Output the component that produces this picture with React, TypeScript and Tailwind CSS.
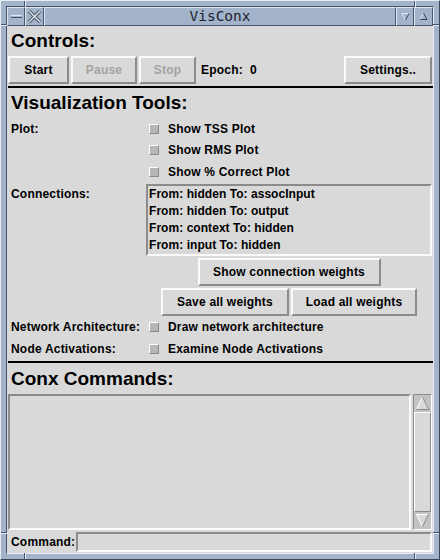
import React from 'react';

// bevel helpers (Motif style)
const raised = 'border-2 border-t-[#fbfbfb] border-l-[#fbfbfb] border-b-[#8b8b8b] border-r-[#8b8b8b]';
const sunken = 'border-2 border-t-[#8b8b8b] border-l-[#8b8b8b] border-b-[#fbfbfb] border-r-[#fbfbfb]';
const frameRaised = 'border border-t-[#e2e8f1] border-l-[#e2e8f1] border-b-[#47536a] border-r-[#47536a]';

const Btn: React.FC<{ w: string; disabled?: boolean; children: React.ReactNode }> = ({ w, disabled, children }) => (
  <button
    className={`${w} h-full ${raised} bg-[#d9d9d9] flex items-center justify-center font-bold text-[12px] tracking-[0.2px] ${
      disabled ? 'text-[#a3a3a3]' : 'text-black'
    }`}>
    {children}
  </button>
);

const Check: React.FC = () => (
  <span className="ml-[3px] w-[10px] h-[10px] shrink-0 bg-[#b6b6b6] border border-t-white border-l-white border-b-[#8a8a8a] border-r-[#8a8a8a]" />
);

const CheckRow: React.FC<{ label?: string; text: string; h: string }> = ({ label, text, h }) => (
  <div className={`flex ${h} items-center`}>
    <div className="w-[139px] pl-[4px] whitespace-nowrap">{label}</div>
    <Check />
    <span className="ml-[9px] whitespace-nowrap">{text}</span>
  </div>
);

const Arrow: React.FC<{ down?: boolean }> = ({ down }) => (
  <svg width="17" height="17" viewBox="0 0 17 17" className="shrink-0">
    {down ? (
      <>
        <polygon points="2,2 15,2 8.5,15" fill="#d9d9d9" />
        <line x1="2" y1="2.5" x2="15" y2="2.5" stroke="#ffffff" />
        <line x1="2.5" y1="2" x2="8.5" y2="15" stroke="#ffffff" />
        <line x1="14.5" y1="2" x2="8.5" y2="15" stroke="#8b8b8b" />
      </>
    ) : (
      <>
        <polygon points="8.5,2 15,15 2,15" fill="#d9d9d9" />
        <line x1="8.5" y1="2" x2="2" y2="15" stroke="#ffffff" />
        <line x1="8.5" y1="2" x2="15" y2="15" stroke="#8b8b8b" />
        <line x1="2" y1="14.5" x2="15" y2="14.5" stroke="#8b8b8b" />
      </>
    )}
  </svg>
);

const Notch: React.FC<{ className: string }> = ({ className }) => <div className={`absolute ${className}`} />;

export default function App() {
  const connections = [
    'From: hidden To: assocInput',
    'From: hidden To: output',
    'From: context To: hidden',
    'From: input To: hidden',
  ];

  return (
    <div className="relative w-[440px] h-[560px] bg-[#a3b3ca] border border-t-[#e6ecf4] border-l-[#e6ecf4] border-b-[#3c475a] border-r-[#3c475a] p-[5px]">
      {/* frame resize notches */}
      <Notch className="left-[23px] top-0 w-[2px] h-[6px] border-l border-l-[#47536a] border-r border-r-[#e2e8f1]" />
      <Notch className="left-[413px] top-0 w-[2px] h-[6px] border-l border-l-[#47536a] border-r border-r-[#e2e8f1]" />
      <Notch className="left-[23px] bottom-0 w-[2px] h-[6px] border-l border-l-[#47536a] border-r border-r-[#e2e8f1]" />
      <Notch className="left-[413px] bottom-0 w-[2px] h-[6px] border-l border-l-[#47536a] border-r border-r-[#e2e8f1]" />
      <Notch className="left-0 top-[23px] w-[6px] h-[2px] border-t border-t-[#47536a] border-b border-b-[#e2e8f1]" />
      <Notch className="right-0 top-[23px] w-[6px] h-[2px] border-t border-t-[#47536a] border-b border-b-[#e2e8f1]" />
      <Notch className="left-0 top-[531px] w-[6px] h-[2px] border-t border-t-[#47536a] border-b border-b-[#e2e8f1]" />
      <Notch className="right-0 top-[531px] w-[6px] h-[2px] border-t border-t-[#47536a] border-b border-b-[#e2e8f1]" />

      <div className="flex flex-col h-full border border-t-[#47536a] border-l-[#47536a] border-b-[#e6ecf4] border-r-[#e6ecf4]">
        {/* title bar */}
        <div className="flex h-[19px] shrink-0 bg-[#a3b3ca]">
          <div className={`w-[18px] ${frameRaised} flex items-center justify-center`}>
            <div className="w-[11px] h-[3px] bg-[#a3b3ca] border-t border-t-[#e2e8f1] border-b border-b-[#47536a]" />
          </div>
          <div className={`w-[19px] ${frameRaised} flex items-center justify-center`}>
            <svg width="15" height="15" viewBox="0 0 15 15">
              <line x1="2" y1="2" x2="13" y2="13" stroke="#47536a" strokeWidth="3.4" />
              <line x1="13" y1="2" x2="2" y2="13" stroke="#47536a" strokeWidth="3.4" />
              <line x1="2" y1="2" x2="13" y2="13" stroke="#dde4ee" strokeWidth="1.4" />
              <line x1="13" y1="2" x2="2" y2="13" stroke="#dde4ee" strokeWidth="1.4" />
            </svg>
          </div>
          <div
            className={`flex-1 ${frameRaised} flex items-center justify-center font-['DejaVu_Sans_Mono','Liberation_Mono',monospace] text-[14.5px] text-[#1c2230]`}>
            VisConx
          </div>
          <div className={`w-[18px] ${frameRaised} flex items-center justify-center`}>
            <svg width="9" height="9" viewBox="0 0 9 9">
              <line x1="1" y1="1.5" x2="8" y2="1.5" stroke="#e2e8f1" />
              <line x1="1" y1="1.5" x2="4.5" y2="8" stroke="#e2e8f1" />
              <line x1="8" y1="1.5" x2="4.5" y2="8" stroke="#3c475a" />
            </svg>
          </div>
          <div className={`w-[19px] ${frameRaised} flex items-center justify-center`}>
            <svg width="9" height="9" viewBox="0 0 9 9">
              <line x1="4.5" y1="1" x2="1" y2="7.5" stroke="#e2e8f1" />
              <line x1="4.5" y1="1" x2="8" y2="7.5" stroke="#3c475a" />
              <line x1="1" y1="7.5" x2="8" y2="7.5" stroke="#3c475a" />
            </svg>
          </div>
        </div>

        {/* content */}
        <div className="flex flex-col flex-1 bg-[#d9d9d9] font-['Liberation_Sans',Arial,sans-serif] font-bold text-[12px] tracking-[0.2px] text-black">
          <div className="h-[30px] leading-[30px] pl-[4px] text-[19px] tracking-normal">Controls:</div>
          <div className="flex h-[28px] px-[1px] gap-[2px]">
            <Btn w="w-[61px]">Start</Btn>
            <Btn w="w-[66px]" disabled>
              Pause
            </Btn>
            <Btn w="w-[57px]" disabled>
              Stop
            </Btn>
            <span className="ml-[3px] self-center whitespace-pre">Epoch:  0</span>
            <div className="flex-1" />
            <Btn w="w-[88px]">Settings..</Btn>
          </div>
          <div className="mt-[2px] ml-[1px] h-[2px] bg-black" />

          <div className="h-[30px] leading-[30px] pl-[4px] text-[19px] tracking-normal">Visualization Tools:</div>
          <CheckRow label="Plot:" text="Show TSS Plot" h="h-[21px]" />
          <CheckRow text="Show RMS Plot" h="h-[22px]" />
          <CheckRow text="Show % Correct  Plot" h="h-[21px]" />

          <div className="flex mt-[2px]">
            <div className="w-[139px] pl-[4px] pt-[2px] leading-[17px]">Connections:</div>
            <div className={`w-[286px] h-[72px] ${sunken} pl-[1px] leading-[17px] tracking-[0.05px]`}>
              {connections.map((c) => (
                <div key={c} className="whitespace-nowrap">
                  {c}
                </div>
              ))}
            </div>
          </div>

          <div className="ml-[139px] w-[286px] flex flex-col items-center gap-[2px] mt-[2px]">
            <div className="h-[28px] flex">
              <Btn w="w-[183px]">Show connection weights</Btn>
            </div>
            <div className="h-[28px] flex gap-[2px]">
              <Btn w="w-[128px]">Save all weights</Btn>
              <Btn w="w-[126px]">Load all weights</Btn>
            </div>
          </div>

          <CheckRow label="Network Architecture:" text="Draw network architecture" h="h-[22px]" />
          <CheckRow label="Node Activations:" text="Examine Node Activations" h="h-[22px]" />
          <div className="mt-[1px] ml-[1px] h-[2px] bg-black" />

          <div className="h-[31px] leading-[31px] pl-[4px] text-[19px] tracking-normal">Conx Commands:</div>
          <div className="flex h-[136px] px-[1px] gap-[2px]">
            <div className={`flex-1 ${sunken} bg-[#d9d9d9]`} />
            <div className="w-[19px] flex flex-col border border-t-[#8b8b8b] border-l-[#8b8b8b] border-b-white border-r-white bg-[#c3c3c3]">
              <Arrow />
              <div className="flex-1 bg-[#d9d9d9] border border-t-white border-l-white border-b-[#8b8b8b] border-r-[#8b8b8b]" />
              <Arrow down />
            </div>
          </div>
          <div className="flex items-center h-[20px] mt-[2px] pr-[1px]">
            <div className="w-[69px] pl-[4px]">Command:</div>
            <div className={`flex-1 h-full ${sunken} bg-[#d9d9d9]`} />
          </div>
        </div>
      </div>
    </div>
  );
}
